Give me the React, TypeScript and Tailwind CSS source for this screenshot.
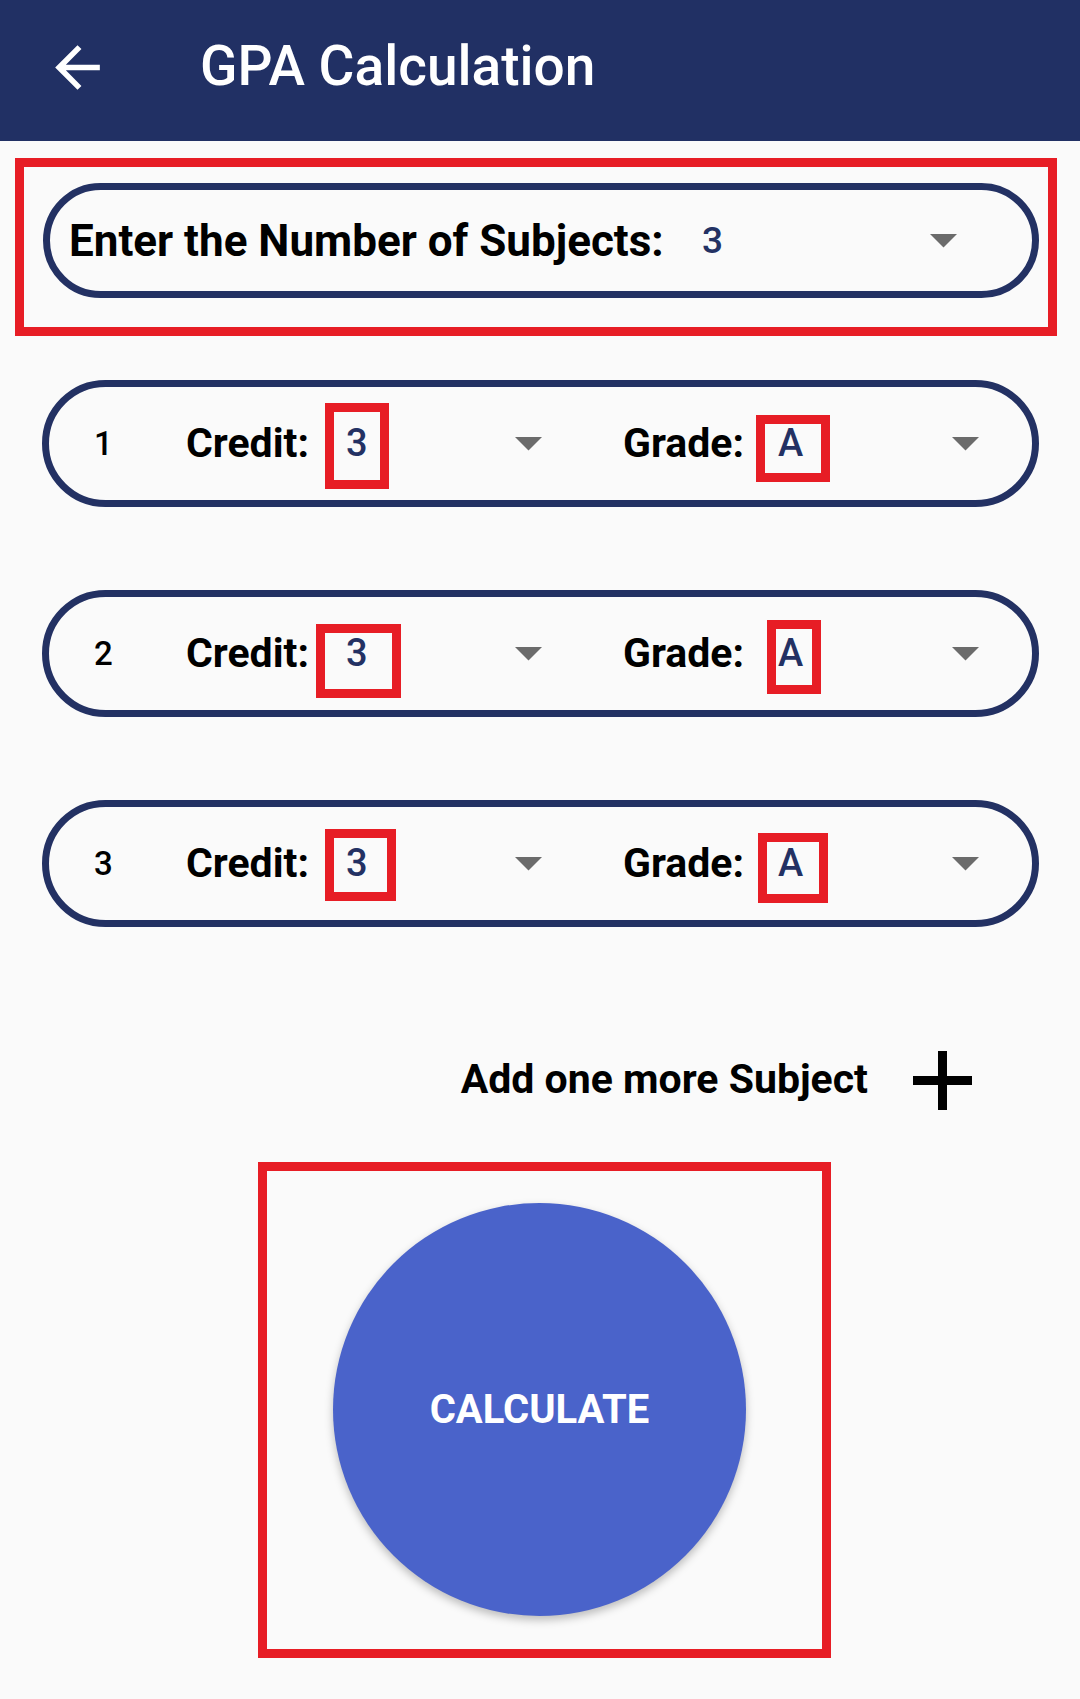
import React from 'react'

const navy = 'text-[#233163]'

type Box = { left: number; top: number; width: number; height: number }

interface RowProps {
  num: number
  credit: string
  grade: string
  creditBox: Box
  gradeBox: Box
}

// red marks, measured from the pill's inner edge
const rows: RowProps[] = [
  {
    num: 1,
    credit: '3',
    grade: 'A',
    creditBox: { left: 276, top: 16, width: 64, height: 86 },
    gradeBox: { left: 707, top: 28, width: 74, height: 67 },
  },
  {
    num: 2,
    credit: '3',
    grade: 'A',
    creditBox: { left: 267, top: 27, width: 85, height: 74 },
    gradeBox: { left: 718, top: 23, width: 54, height: 74 },
  },
  {
    num: 3,
    credit: '3',
    grade: 'A',
    creditBox: { left: 276, top: 22, width: 71, height: 72 },
    gradeBox: { left: 709, top: 26, width: 70, height: 70 },
  },
]

function Caret() {
  return (
    <svg width="27" height="14" viewBox="0 0 27 14" className="shrink-0">
      <path d="M0 0h27L13.5 13.5z" fill="#6b6b6b" />
    </svg>
  )
}

function Mark({ box }: { box: Box }) {
  return (
    <div
      className="absolute border-[9px] border-[#e71d25] pointer-events-none"
      style={{ left: box.left, top: box.top, width: box.width, height: box.height }}
    />
  )
}

function SubjectRow({ num, credit, grade, creditBox, gradeBox }: RowProps) {
  return (
    <div className="relative ml-[42px] w-[997px] h-[127px] rounded-full border-[7px] border-[#233163] flex items-center">
      <span className="ml-[45px] w-[92px] text-[33px] font-medium text-black">{num}</span>
      <div className="flex w-[437px] items-center">
        <span className="w-[160px] text-[41px] font-bold text-black">Credit:</span>
        <span className={`w-[169px] text-[38px] font-medium ${navy}`}>{credit}</span>
        <Caret />
      </div>
      <div className="flex items-center">
        <span className="w-[155px] text-[41px] font-bold text-black">Grade:</span>
        <span className={`w-[174px] text-[38px] font-medium ${navy}`}>{grade}</span>
        <Caret />
      </div>
      <Mark box={creditBox} />
      <Mark box={gradeBox} />
    </div>
  )
}

export default function App() {
  return (
    <div className="w-[1080px] min-h-[1699px] bg-[#fafafa] font-['Roboto',sans-serif]">
      <header className="h-[141px] bg-[#213064] flex items-center">
        <svg width="67" height="67" viewBox="0 0 24 24" className="ml-[44px] mb-[6px]">
          <path d="M20 11H7.83l5.59-5.59L12 4l-8 8 8 8 1.41-1.41L7.83 13H20v-2z" fill="#fff" />
        </svg>
        <h1 className="ml-[89px] mb-[8px] text-[55px] font-medium text-white">GPA Calculation</h1>
      </header>

      <div className="mt-[17px] ml-[15px] w-[1042px] h-[178px] border-[9px] border-[#e71d25] pt-[16px] pl-[19px]">
        <div className="w-[996px] h-[115px] rounded-full border-[7px] border-[#233163] flex items-center">
          <span className="ml-[19px] w-[633px] text-[44px] font-bold text-black">
            Enter the Number of Subjects:
          </span>
          <span className={`w-[228px] text-[37px] font-medium ${navy}`}>3</span>
          <Caret />
        </div>
      </div>

      <div className="mt-[44px] flex flex-col gap-[83px]">
        {rows.map((r) => (
          <SubjectRow key={r.num} {...r} />
        ))}
      </div>

      <div className="mt-[123px] h-[60px] flex items-center justify-end pr-[108px]">
        <span className="text-[41px] font-bold text-black">Add one more Subject</span>
        <svg width="59" height="59" viewBox="0 0 59 59" className="ml-[45px]">
          <path d="M29.5 0v59M0 29.5h59" stroke="#000" strokeWidth="9" />
        </svg>
      </div>

      <div className="mt-[52px] ml-[258px] w-[573px] h-[496px] border-[9px] border-[#e71d25] pt-[32px] pl-[66px]">
        <button className="w-[413px] h-[413px] rounded-full bg-[#4a63ca] shadow-[0_4px_8px_rgba(0,0,0,0.25)] flex items-center justify-center">
          <span className="text-[40px] font-bold text-white">CALCULATE</span>
        </button>
      </div>
    </div>
  )
}
